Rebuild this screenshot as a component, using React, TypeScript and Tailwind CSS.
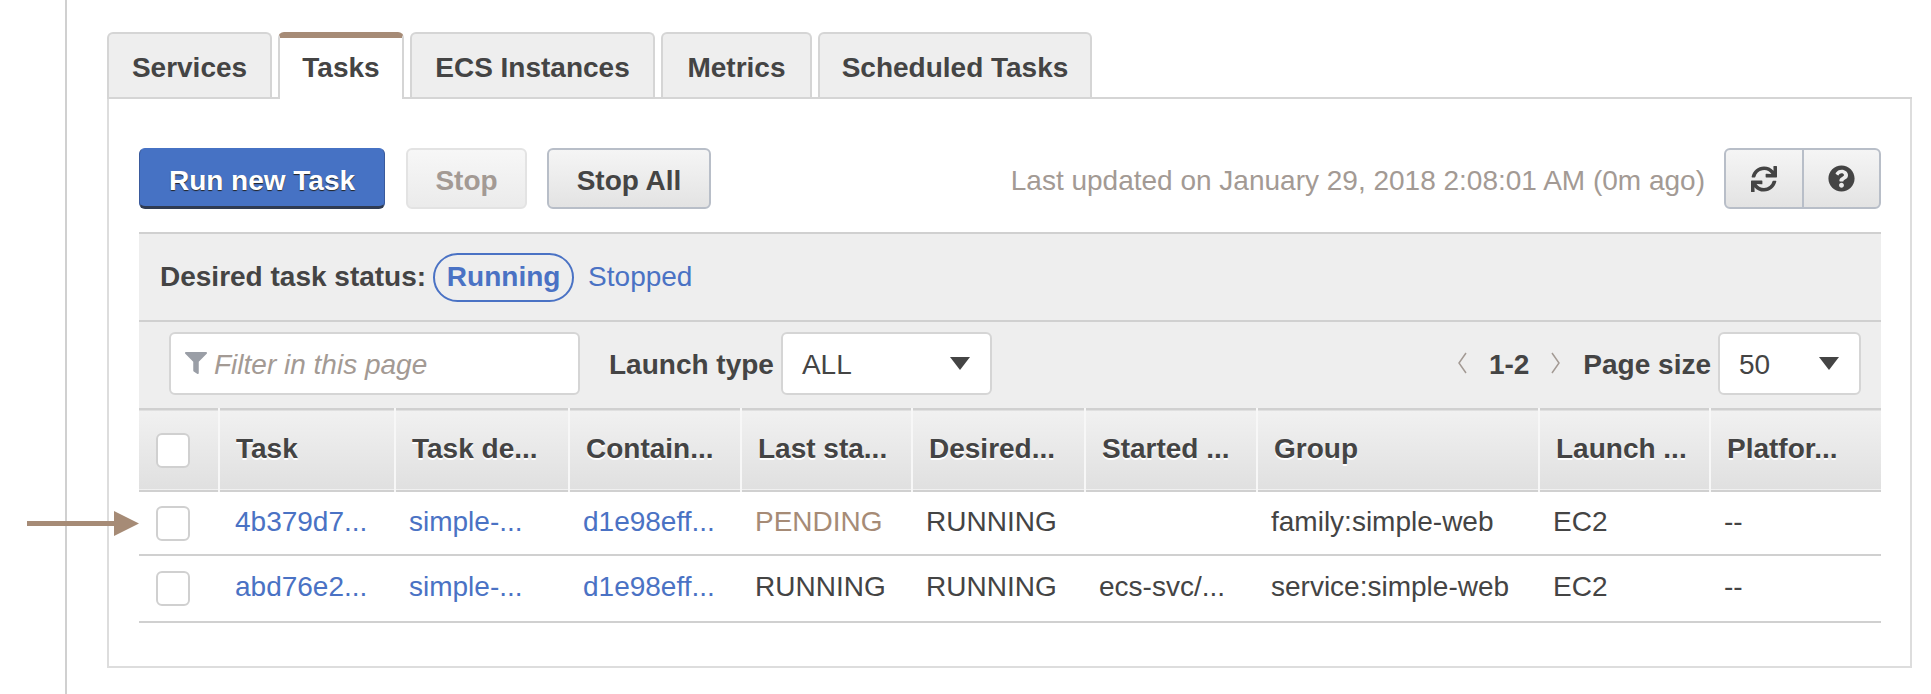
import { FaFilter, FaQuestionCircle, FaSync } from 'react-icons/fa'

const tabs = [
  { label: 'Services', width: 'w-[165px]' },
  { label: 'Tasks', width: 'w-[126px]', active: true },
  { label: 'ECS Instances', width: 'w-[245px]' },
  { label: 'Metrics', width: 'w-[151px]' },
  { label: 'Scheduled Tasks', width: 'w-[274px]' },
]

const columns = [
  { label: 'Task', width: 'w-[176px]' },
  { label: 'Task de...', width: 'w-[174px]' },
  { label: 'Contain...', width: 'w-[172px]' },
  { label: 'Last sta...', width: 'w-[171px]' },
  { label: 'Desired...', width: 'w-[173px]' },
  { label: 'Started ...', width: 'w-[172px]' },
  { label: 'Group', width: 'w-[282px]' },
  { label: 'Launch ...', width: 'w-[171px]' },
  { label: 'Platfor...', width: 'w-[171px]' },
]

const rows = [
  ['4b379d7...', 'simple-...', 'd1e98eff...', 'PENDING', 'RUNNING', '', 'family:simple-web', 'EC2', '--'],
  ['abd76e2...', 'simple-...', 'd1e98eff...', 'RUNNING', 'RUNNING', 'ecs-svc/...', 'service:simple-web', 'EC2', '--'],
]

function Caret() {
  return (
    <svg viewBox="0 0 20 13" className="h-[13px] w-5 fill-[#444]">
      <path d="M0 0h20L10 13z" />
    </svg>
  )
}

function Checkbox() {
  return <div className="h-[35px] w-[34px] rounded-md border-2 border-[#d0d0d0] bg-white" />
}

function Select({ value, className }: { value: string; className: string }) {
  return (
    <div className={`flex h-[63px] items-center justify-between rounded-md border-2 border-[#d5d5d5] bg-white pl-[19px] pr-[20px] text-[#444] ${className}`}>
      <span className="pt-[3px]">{value}</span>
      <Caret />
    </div>
  )
}

export default function App() {
  return (
    <div className="relative h-[694px] w-[1931px] overflow-hidden bg-white font-['Liberation_Sans',Arial,sans-serif] text-[28px] text-[#444]">
      <div className="ml-[65px] h-full border-l-2 border-[#d0d0d0] pl-[40px] pt-[32px]">
        {/* Tabs */}
        <div className="flex h-[67px] w-[1805px] gap-[6px] border-b-2 border-[#d5d5d5]">
          {tabs.map((tab) =>
            tab.active ? (
              <div
                key={tab.label}
                className={`-mb-[2px] flex h-[67px] items-center justify-center rounded-t-md border-x-2 border-t-[6px] border-x-[#d5d5d5] border-t-[#a68b76] bg-white pb-[2px] font-bold ${tab.width}`}
              >
                {tab.label}
              </div>
            ) : (
              <div
                key={tab.label}
                className={`flex h-[65px] items-center justify-center rounded-t-md border-x-2 border-t-2 border-[#d5d5d5] bg-[#eeeeee] pt-[4px] font-bold ${tab.width}`}
              >
                {tab.label}
              </div>
            ),
          )}
        </div>

        {/* Panel */}
        <div className="h-[569px] w-[1805px] border-x-2 border-b-2 border-[#dddddd] pl-[30px] pr-[29px] pt-[49px]">
          <div className="flex h-[61px] items-center">
            <button className="h-[61px] w-[246px] rounded-md border-x border-b-[3px] border-t border-[#2f3b52] border-x-[#3a5a9c] border-t-[#4672c4] bg-[#4672c4] pt-[6px] font-bold text-white [text-shadow:0_1px_1px_#222]">
              Run new Task
            </button>
            <button className="ml-[21px] h-[61px] w-[121px] rounded-md border-2 border-[#e3e3e3] bg-gradient-to-b from-[#f7f7f7] to-[#ebebeb] pt-[4px] font-bold text-[#a39a94]">
              Stop
            </button>
            <button className="ml-[20px] h-[61px] w-[164px] rounded-md border-2 border-[#b8bec8] bg-gradient-to-b from-[#f5f5f5] to-[#e3e3e3] pt-[4px] font-bold">
              Stop All
            </button>
            <span className="ml-auto pt-[4px] text-[#a39a94]">Last updated on January 29, 2018 2:08:01 AM (0m ago)</span>
            <div className="ml-[19px] flex h-[61px] w-[157px] rounded-md border-2 border-[#b8bec8] bg-gradient-to-b from-[#f5f5f5] to-[#e3e3e3]">
              <div className="flex w-[78px] items-center justify-center border-r-2 border-[#b8bec8]">
                <FaSync className="h-[26px] w-[26px] text-[#444]" />
              </div>
              <div className="flex flex-1 items-center justify-center">
                <FaQuestionCircle className="h-[27px] w-[27px] text-[#444]" />
              </div>
            </div>
          </div>

          {/* Status filter */}
          <div className="mt-[23px] flex h-[90px] items-center border-y-2 border-[#d0d0d0] bg-[#eeeeee] pl-[21px]">
            <span className="font-bold">Desired task status:</span>
            <span className="ml-[7px] flex h-[49px] w-[141px] items-center justify-center rounded-full border-2 border-[#4a72c4] font-bold text-[#4a72c4]">
              Running
            </span>
            <span className="ml-[14px] text-[#4a72c4]">Stopped</span>
          </div>

          {/* Search row */}
          <div className="flex h-[86px] items-center bg-[#eeeeee] pb-[4px] pl-[30px] pr-[20px]">
            <div className="flex h-[63px] w-[411px] items-center rounded-md border-2 border-[#d5d5d5] bg-white pl-[14px] italic text-[#a39a94]">
              <FaFilter className="mr-[7px] h-[22px] w-[22px] text-[#9a9ea6]" />
              <span className="pt-[3px]">Filter in this page</span>
            </div>
            <span className="ml-[29px] pt-[4px] font-bold">Launch type</span>
            <Select value="ALL" className="ml-[7px] w-[211px]" />
            <svg viewBox="0 0 10 22" className="ml-auto h-[22px] w-[10px] fill-none stroke-[#a39a94] stroke-[1.5]">
              <path d="M9 1L2 11l7 10" />
            </svg>
            <span className="ml-[22px] pt-[3px] font-bold">1-2</span>
            <svg viewBox="0 0 10 22" className="ml-[22px] h-[22px] w-[10px] fill-none stroke-[#a39a94] stroke-[1.5]">
              <path d="M1 1l7 10-7 10" />
            </svg>
            <span className="ml-[22px] pt-[3px] font-bold">Page size</span>
            <Select value="50" className="ml-[7px] w-[143px]" />
          </div>

          {/* Table */}
          <table className="w-[1742px] table-fixed border-collapse">
            <thead>
              <tr className="h-[82px] border-y-2 border-[#d0d0d0] bg-gradient-to-b from-[#f1f1f1] to-[#e0e0e0]">
                <th className="w-[80px] pl-[17px] align-middle">
                  <Checkbox />
                </th>
                {columns.map((col) => (
                  <th
                    key={col.label}
                    className={`border-l-2 border-[#f7f7f7] pb-[2px] pl-[16px] text-left font-bold [text-shadow:0_2px_0_#fff] ${col.width}`}
                  >
                    {col.label}
                  </th>
                ))}
              </tr>
            </thead>
            <tbody>
              {rows.map((row, i) => (
                <tr key={row[0]} className={i === 0 ? 'h-[64px] border-b-2 border-[#d0d0d0]' : 'h-[67px] border-b-2 border-[#d0d0d0]'}>
                  <td className="pl-[17px] align-middle">
                    <Checkbox />
                  </td>
                  {row.map((cell, j) => (
                    <td
                      key={j}
                      className={`pb-[3px] ${j === 0 ? 'pl-[16px]' : 'pl-[14px]'} ${j < 3 ? 'text-[#4a72c4]' : cell === 'PENDING' ? 'text-[#a68b76]' : 'text-[#444]'}`}
                    >
                      {cell}
                    </td>
                  ))}
                </tr>
              ))}
            </tbody>
          </table>
        </div>
      </div>

      {/* Annotation arrow */}
      <svg viewBox="0 0 112 25" className="absolute left-[27px] top-[511px] h-[25px] w-[112px] fill-[#a68b76]">
        <path d="M0 10h87V0l25 12.5L87 25V15H0z" />
      </svg>
    </div>
  )
}
